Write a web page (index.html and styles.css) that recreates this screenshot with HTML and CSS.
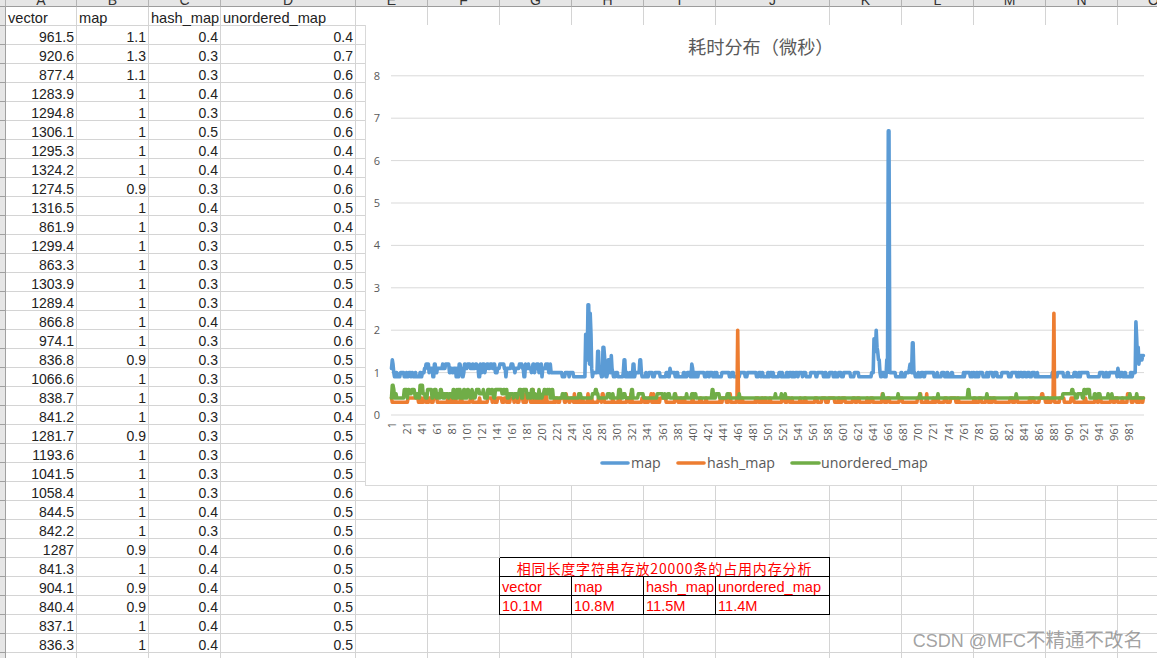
FILE: index.html
```html
<!DOCTYPE html>
<html lang="zh-CN">
<head>
    <meta charset="UTF-8">
    <meta name="viewport" content="width=device-width, initial-scale=1.0">
    <title>耗时分布</title>
    <link rel="stylesheet" href="styles.css">
</head>
<body>
    <div class="sheet">
        <table class="grid">
            <colgroup>
                <col class="col-head"><col class="col-a"><col class="col-std"><col class="col-std"><col class="col-d">
                <col class="col-std"><col class="col-std"><col class="col-std"><col class="col-std"><col class="col-std">
                <col class="col-j">
                <col class="col-std"><col class="col-std"><col class="col-std"><col class="col-std"><col class="col-std">
            </colgroup>
            <tbody id="sheetBody">
                <tr class="letters">
                    <th></th><th><div>A</div></th><th><div>B</div></th><th><div>C</div></th><th><div>D</div></th><th><div>E</div></th><th><div>F</div></th><th><div>G</div></th><th><div>H</div></th><th><div>I</div></th><th><div>J</div></th><th><div>K</div></th><th><div>L</div></th><th><div>M</div></th><th><div>N</div></th><th><div>O</div></th>
                </tr>
            </tbody>
        </table>

        <div class="chart">
            <svg id="chartSvg" viewBox="366 25 791 460" width="791" height="460">
                <text class="chart-title" x="688" y="54">耗时分布（微秒）</text>
                <g id="gridLines"></g>
                <g id="axisLabels"></g>
                <g id="series"></g>
                <line class="map-line" x1="602" y1="463" x2="628" y2="463"></line>
                <text class="legend" x="631" y="468">map</text>
                <line class="hash-line" x1="678" y1="463" x2="704" y2="463"></line>
                <text class="legend" x="707" y="468">hash_map</text>
                <line class="unordered-line" x1="792" y1="463" x2="819" y2="463"></line>
                <text class="legend" x="821" y="468">unordered_map</text>
            </svg>
        </div>

        <div class="watermark">CSDN @MFC<span class="watermark-cjk">不精通不改名</span></div>
    </div>

    <script src="chart.js"></script>
</body>
</html>
```

FILE: styles.css
```css
* {
    margin: 0;
    padding: 0;
    box-sizing: border-box;
}

html, body {
    width: 100%;
    height: 100%;
    overflow: hidden;
    background-color: white;
}

.sheet {
    position: relative;
    width: 1157px;
    height: 658px;
    overflow: hidden;
    font-family: "Liberation Sans", "Noto Sans CJK SC", sans-serif;
    font-size: 14px;
    color: #222;
}

.grid {
    border-collapse: separate;
    border-spacing: 0;
    table-layout: fixed;
    width: 1190px;
}

.col-head { width: 6px; }
.col-a { width: 71px; }
.col-std { width: 72px; }
.col-d { width: 135px; }
.col-j { width: 114px; }

.grid td {
    height: 19px;
    line-height: 14px;
    padding: 0 2px 0 2px;
    vertical-align: bottom;
    white-space: nowrap;
    overflow: visible;
    border-right: 1px solid #d4d4d4;
    border-bottom: 1px solid #d4d4d4;
}

.grid td.num {
    text-align: right;
}

.grid td.label {
    font-size: 14.6px;
}

.grid td.row-head {
    padding: 0;
    background-color: #e6e6e6;
    border-right: 1px solid #a0a0a0;
    border-bottom: 1px solid #a0a0a0;
}

.letters th {
    height: 7px;
    font-weight: normal;
    color: #333;
    background-color: #e6e6e6;
    border-right: 1px solid #b4b4b4;
    border-bottom: 1px solid #9c9c9c;
}

.letters th div {
    height: 6px;
    line-height: 0;
    text-align: center;
}

/* small table under the chart */
.grid td.memo {
    color: #ff0000;
    font-size: 14.6px;
    padding-bottom: 1px;
    border-right: 1px solid #000;
    border-bottom: 1px solid #000;
    box-shadow: 0 -1px 0 #000, -1px 0 0 #000;
}

.grid td.memo-title {
    text-align: center;
    font-family: "Noto Sans CJK SC", "Liberation Sans", sans-serif;
    font-size: 14px;
    letter-spacing: 0.85px;
}

.chart {
    position: absolute;
    left: 365px;
    top: 25px;
    width: 792px;
    height: 461px;
    background-color: white;
    border-left: 1px solid #d9d9d9;
    border-bottom: 1px solid #d9d9d9;
}

.chart svg {
    display: block;
}

.chart-title {
    font-family: "Noto Sans CJK SC", sans-serif;
    font-size: 18.2px;
    fill: #595959;
}

.axis-label {
    font-family: "Open Sans", sans-serif;
    font-size: 11px;
    fill: #595959;
}

.legend {
    font-family: "Open Sans", sans-serif;
    font-size: 14.2px;
    fill: #595959;
}

.grid-line {
    stroke: #d9d9d9;
    stroke-width: 1;
}

.map-line, .hash-line, .unordered-line {
    fill: none;
    stroke-width: 3.6;
    stroke-linejoin: round;
    stroke-linecap: round;
}

.map-line { stroke: #5b9bd5; }
.hash-line { stroke: #ed7d31; }
.unordered-line { stroke: #70ad47; }

.watermark {
    position: absolute;
    right: 14px;
    top: 627px;
    font-family: "Liberation Sans", "Noto Sans CJK SC", sans-serif;
    font-size: 18px;
    line-height: 24px;
    color: rgba(110, 110, 110, 0.65);
    white-space: nowrap;
}

.watermark-cjk {
    font-family: "Noto Sans CJK SC", sans-serif;
    font-size: 19.5px;
}
```

FILE: chart.js
```js
// Sheet rows: vector, map, hash_map, unordered_map
const rows = [
    [961.5, 1.1, 0.4, 0.4], [920.6, 1.3, 0.3, 0.7], [877.4, 1.1, 0.3, 0.6], [1283.9, 1, 0.4, 0.6],
    [1294.8, 1, 0.3, 0.6], [1306.1, 1, 0.5, 0.6], [1295.3, 1, 0.4, 0.4], [1324.2, 1, 0.4, 0.4],
    [1274.5, 0.9, 0.3, 0.6], [1316.5, 1, 0.4, 0.5], [861.9, 1, 0.3, 0.4], [1299.4, 1, 0.3, 0.5],
    [863.3, 1, 0.3, 0.5], [1303.9, 1, 0.3, 0.5], [1289.4, 1, 0.3, 0.4], [866.8, 1, 0.4, 0.4],
    [974.1, 1, 0.3, 0.6], [836.8, 0.9, 0.3, 0.5], [1066.6, 1, 0.3, 0.5], [838.7, 1, 0.3, 0.5],
    [841.2, 1, 0.3, 0.4], [1281.7, 0.9, 0.3, 0.5], [1193.6, 1, 0.3, 0.6], [1041.5, 1, 0.3, 0.5],
    [1058.4, 1, 0.3, 0.6], [844.5, 1, 0.4, 0.5], [842.2, 1, 0.3, 0.5], [1287, 0.9, 0.4, 0.6],
    [841.3, 1, 0.4, 0.5], [904.1, 0.9, 0.4, 0.5], [840.4, 0.9, 0.4, 0.5], [837.1, 1, 0.4, 0.5],
    [836.3, 1, 0.4, 0.5]
];

const memo = {
    title: '相同长度字符串存放20000条的占用内存分析',
    head: ['vector', 'map', 'hash_map', 'unordered_map'],
    size: ['10.1M', '10.8M', '11.5M', '11.4M']
};

function cells(n) {
    return '<td></td>'.repeat(n);
}

function memoCells(values) {
    return values.map(v => `<td class="memo">${v}</td>`).join('');
}

// Row 1 holds the headers, memo table sits on rows 30-32 in columns G-J
function buildSheet() {
    const body = document.getElementById('sheetBody');
    let html = '<tr><td class="row-head"></td><td class="label">vector</td><td class="label">map</td><td class="label">hash_map</td><td class="label">unordered_map</td>' + cells(11) + '</tr>';
    rows.forEach((row, i) => {
        const rowNo = i + 2;
        let rest = cells(11);
        if (rowNo === 30) {
            rest = cells(2) + `<td class="memo memo-title" colspan="4">${memo.title}</td>` + cells(5);
        } else if (rowNo === 31) {
            rest = cells(2) + memoCells(memo.head) + cells(5);
        } else if (rowNo === 32) {
            rest = cells(2) + memoCells(memo.size) + cells(5);
        }
        html += '<tr><td class="row-head"></td>' + row.map(v => `<td class="num">${v}</td>`).join('') + rest + '</tr>';
    });
    html += '<tr><td class="row-head"></td>' + cells(15) + '</tr>';
    body.insertAdjacentHTML('beforeend', html);
}

// Chart scale
const X0 = 391.5, XSTEP = 0.7527, Y0 = 415, YSTEP = 42.4;
const xAt = i => X0 + i * XSTEP;
const yAt = v => Y0 - v * YSTEP;

// Small seeded generator so the noise is the same on every load
let seed = 20000;
function rnd() {
    seed = (seed + 0x6D2B79F5) | 0;
    let t = Math.imul(seed ^ (seed >>> 15), 1 | seed);
    t = (t + Math.imul(t ^ (t >>> 7), 61 | t)) ^ t;
    return ((t ^ (t >>> 14)) >>> 0) / 4294967296;
}

function pick(choices) {
    let r = rnd();
    for (const [value, weight] of choices) {
        if (r < weight) return value;
        r -= weight;
    }
    return choices[0][0];
}

function noise(data, from, to, choices, maxRun) {
    let i = from;
    while (i < to) {
        const value = pick(choices);
        const run = 1 + Math.floor(rnd() * maxRun);
        for (let k = 0; k < run && i < to; k++, i++) data[i] = value;
    }
}

function setPoints(data, points) {
    Object.keys(points).forEach(i => { data[i] = points[i]; });
}

function fill(data, from, to, value) {
    for (let i = from; i < to; i++) data[i] = value;
}

function mapSeries() {
    const data = new Array(1000).fill(1);
    noise(data, 4, 44, [[0.9, 0.55], [1, 0.45]], 2);
    noise(data, 44, 212, [[1.1, 0.42], [1.2, 0.4], [1, 0.14], [0.9, 0.04]], 2);
    noise(data, 212, 1000, [[0.9, 0.5], [1, 0.5]], 3);
    fill(data, 246, 257, 0.9);
    fill(data, 623, 636, 0.9);
    fill(data, 746, 760, 0.9);
    fill(data, 859, 878, 0.9);
    setPoints(data, {
        0: 1.1, 1: 1.3, 2: 1.2, 3: 1,
        258: 1.9, 259: 1.9, 260: 1.3, 261: 2.6, 262: 2.6, 263: 1.2, 264: 2.4, 265: 1.9, 266: 1.1, 267: 0.9,
        274: 1.5, 275: 1.5, 276: 1, 281: 1.6, 282: 1.6, 283: 1.4, 284: 1.1, 288: 1.3, 290: 1.3, 292: 1.4, 293: 1.1,
        309: 1.3, 310: 1.3, 321: 1.2, 322: 1.2, 330: 1.3, 331: 1.3, 332: 1, 370: 1.1, 399: 1.2, 400: 1.1,
        641: 1.8, 642: 1.8, 643: 1.5, 644: 2, 645: 1.6, 646: 1.5, 647: 1.3, 648: 1.3, 649: 1, 650: 0.9,
        658: 1.3, 659: 1, 660: 6.7, 661: 6.7, 662: 1, 688: 1.1, 689: 1.2, 690: 1.2, 691: 1, 692: 1.7, 693: 1.7, 694: 1,
        965: 1.1, 988: 1, 989: 2.2, 990: 1.8, 991: 1.3, 992: 1.6, 993: 1.2, 994: 1.4, 995: 1.3, 996: 1.4, 997: 1.3, 998: 1.4, 999: 1.4
    });
    return data;
}

function hashSeries() {
    const data = new Array(1000).fill(0.3);
    fill(data, 22, 36, 0.4);
    noise(data, 40, 1000, [[0.3, 0.7], [0.4, 0.3]], 3);
    [155, 172, 178, 187, 188, 195, 205, 232, 243, 249, 261, 280, 281, 302, 303, 318, 345, 348, 377, 400, 450,
        652, 702, 703, 711, 864, 865, 978, 979].forEach(i => { data[i] = i === 187 || i === 188 ? 0.6 : 0.5; });
    setPoints(data, { 0: 0.4, 459: 0.4, 460: 2, 461: 0.3, 879: 0.4, 880: 2.4, 881: 0.3, 998: 0.3, 999: 0.4 });
    return data;
}

function unorderedSeries() {
    const data = new Array(1000).fill(0.4);
    noise(data, 0, 215, [[0.4, 0.3], [0.5, 0.35], [0.6, 0.35]], 2);
    noise(data, 215, 470, [[0.4, 0.78], [0.5, 0.18], [0.6, 0.04]], 3);
    setPoints(data, { 0: 0.4, 1: 0.7, 2: 0.7, 3: 0.6, 38: 0.7, 39: 0.7, 40: 0.7, 41: 0.7 });
    [510, 518, 523, 653, 673, 702, 726, 791, 830, 952, 957, 981, 990].forEach(i => { data[i] = 0.5; });
    data[766] = 0.6;
    data[767] = 0.6;
    noise(data, 892, 928, [[0.4, 0.3], [0.5, 0.5], [0.6, 0.2]], 3);
    noise(data, 930, 942, [[0.4, 0.4], [0.5, 0.6]], 3);
    return data;
}

function polyline(data, className) {
    const points = data.map((v, i) => xAt(i).toFixed(1) + ',' + yAt(v).toFixed(1)).join(' ');
    return `<polyline class="${className}" points="${points}"></polyline>`;
}

function buildChart() {
    let grid = '';
    let labels = '';
    for (let v = 0; v <= 8; v++) {
        const y = yAt(v).toFixed(1);
        grid += `<line class="grid-line" x1="391" y1="${y}" x2="1144" y2="${y}"></line>`;
        labels += `<text class="axis-label" x="377" y="${(yAt(v) + 4).toFixed(1)}" text-anchor="middle">${v}</text>`;
    }
    for (let i = 0; i < 1000; i += 20) {
        const x = xAt(i) + 4;
        labels += `<text class="axis-label" transform="translate(${x.toFixed(1)},422) rotate(-90)" text-anchor="end">${i + 1}</text>`;
    }
    document.getElementById('gridLines').innerHTML = grid;
    document.getElementById('axisLabels').innerHTML = labels;
    document.getElementById('series').innerHTML =
        polyline(mapSeries(), 'map-line') +
        polyline(hashSeries(), 'hash-line') +
        polyline(unorderedSeries(), 'unordered-line');
}

buildSheet();
buildChart();
```
